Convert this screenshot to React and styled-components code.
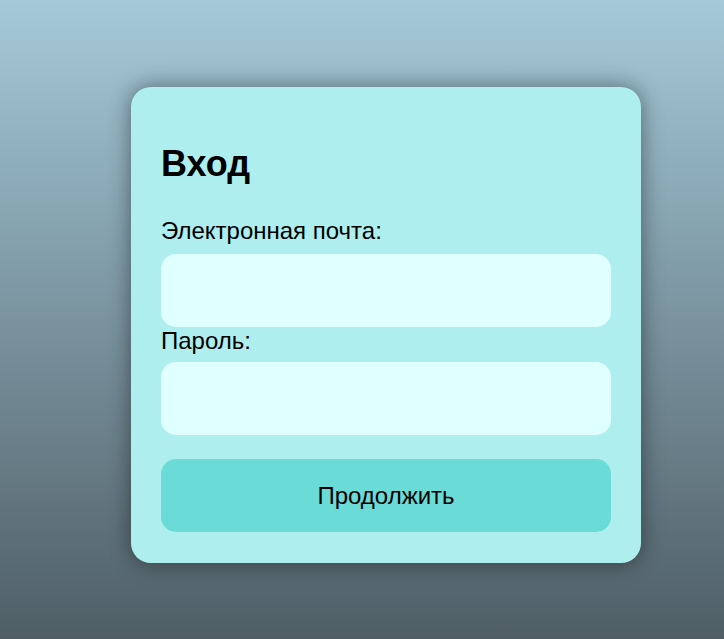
import styled, { createGlobalStyle } from "styled-components";

const GlobalStyle = createGlobalStyle`
  html, body {
    margin: 0;
    height: 100%;
  }
  body {
    font-family: "Liberation Sans", Arial, sans-serif;
    background: linear-gradient(180deg, #a5c9d9 0%, #4f5e65 100%);
    background-attachment: fixed;
  }
`;

const Page = styled.div`
  min-height: 100vh;
  box-sizing: border-box;
  padding: 87px 0 0 131px;
`;

const Card = styled.form`
  width: 510px;
  box-sizing: border-box;
  padding: 30px 30px 31px;
  background: #afeeee;
  border-radius: 20px;
  box-shadow: 0 0 22px rgba(0, 0, 0, 0.45);
  display: flex;
  flex-direction: column;
`;

const Title = styled.h1`
  margin: 26px 0 33px;
  font-size: 36px;
  line-height: 41px;
  font-weight: bold;
  color: #000;
`;

const Label = styled.label`
  display: block;
  font-size: 24px;
  line-height: 27px;
  color: #000;
  margin-bottom: ${(p) => p.$gap}px;
`;

const Input = styled.input`
  display: block;
  width: 100%;
  height: 73px;
  box-sizing: border-box;
  border: none;
  outline: none;
  border-radius: 15px;
  background: #e0ffff;
  padding: 0 16px;
  font-size: 20px;
  font-family: inherit;
`;

const Button = styled.button`
  margin-top: 24px;
  width: 100%;
  height: 73px;
  border: none;
  border-radius: 15px;
  background: #6adbd6;
  color: #000;
  font-family: inherit;
  font-size: 24px;
  cursor: pointer;
`;

export default function App() {
  return (
    <>
      <GlobalStyle />
      <Page>
        <Card onSubmit={(e) => e.preventDefault()}>
          <Title>Вход</Title>
          <Label htmlFor="email" $gap={10}>Электронная почта:</Label>
          <Input id="email" type="email" />
          <Label htmlFor="password" $gap={8}>Пароль:</Label>
          <Input id="password" type="password" />
          <Button type="submit">Продолжить</Button>
        </Card>
      </Page>
    </>
  );
}
